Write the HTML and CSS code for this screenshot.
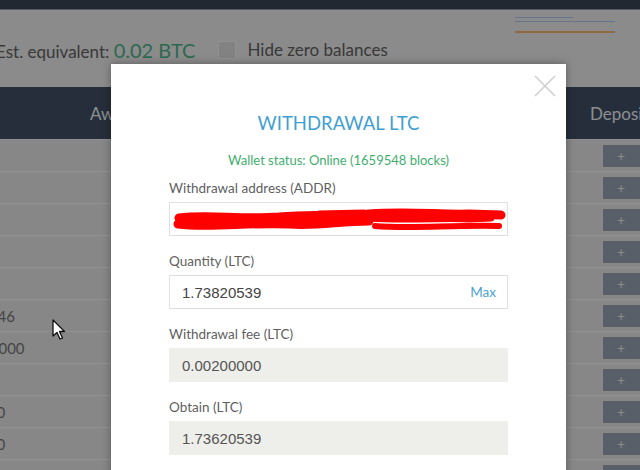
FILE: index.html
```html
<!DOCTYPE html>
<html>
<head>
<meta charset="utf-8">
<link rel="stylesheet" href="styles.css">
</head>
<body>
<div class="page">
  <div class="topbar"></div>
  <div class="summary">
    <div class="est">Est. equivalent: <span class="btc">0.02 BTC</span></div>
    <div class="hide"><span class="box"></span>Hide zero balances</div>
    <div class="links">
      <span class="ln ln-blue short"></span>
      <span class="ln ln-blue"></span>
      <span class="ln ln-orange"></span>
    </div>
  </div>
  <div class="balances">
    <div class="row head">
      <div class="c1"></div>
      <div class="c2">Awaiting</div>
      <div class="c3">Deposit</div>
    </div>
    <div class="row"><div class="c1"></div><div class="c2"></div><div class="c3"><span class="btn">+</span></div></div>
    <div class="row"><div class="c1"></div><div class="c2"></div><div class="c3"><span class="btn">+</span></div></div>
    <div class="row"><div class="c1"></div><div class="c2"></div><div class="c3"><span class="btn">+</span></div></div>
    <div class="row"><div class="c1"></div><div class="c2"></div><div class="c3"><span class="btn">+</span></div></div>
    <div class="row"><div class="c1"></div><div class="c2"></div><div class="c3"><span class="btn">+</span></div></div>
    <div class="row"><div class="c1 v46">0.00000046</div><div class="c2"></div><div class="c3"><span class="btn">+</span></div></div>
    <div class="row"><div class="c1 v000">10.00000000</div><div class="c2"></div><div class="c3"><span class="btn">+</span></div></div>
    <div class="row"><div class="c1"></div><div class="c2"></div><div class="c3"><span class="btn">+</span></div></div>
    <div class="row"><div class="c1 v0">0.0000000</div><div class="c2"></div><div class="c3"><span class="btn">+</span></div></div>
    <div class="row"><div class="c1 v0">0.0000000</div><div class="c2"></div><div class="c3"><span class="btn">+</span></div></div>
    <div class="row"><div class="c1"></div><div class="c2"></div><div class="c3"><span class="btn">+</span></div></div>
  </div>
</div>

<div class="overlay"></div>

<svg class="cursor" width="14" height="22" viewBox="0 0 14 22">
  <path d="M1 1 L1 17 L5 13.5 L8 20 L10.5 19 L7.5 12.5 L12.5 12.5 Z" fill="#fff" stroke="#111" stroke-width="1.3" stroke-linejoin="round"/>
</svg>

<div class="modal">
  <svg class="close" width="22" height="22" viewBox="0 0 22 22">
    <path d="M1 1 L21 21 M21 1 L1 21" stroke="#cfcfcf" stroke-width="1.6"/>
  </svg>
  <h2 class="title">WITHDRAWAL LTC</h2>
  <div class="status">Wallet status: Online (1659548 blocks)</div>

  <div class="field">
    <div class="label">Withdrawal address (ADDR)</div>
    <div class="input">
      <svg class="scribble" width="339" height="34" viewBox="0 0 339 34">
        <g fill="none" stroke="#f00" stroke-linecap="round" stroke-linejoin="round">
          <path d="M10 16 C40 12 70 18 110 15 C150 11 170 16 200 12 C240 9 270 13 300 12 L332 13" stroke-width="9"/>
          <path d="M9 22 C40 26 80 20 120 22 C150 24 170 19 200 19" stroke-width="9"/>
          <path d="M12 19 L120 19" stroke-width="9"/>
          <path d="M200 16 C240 19 280 15 300 17 L322 16" stroke-width="7"/>
          <path d="M206 24 C240 27 280 23 330 24" stroke-width="6"/>
          <path d="M150 10 L195 9" stroke-width="3"/>
        </g>
      </svg>
    </div>
  </div>

  <div class="field">
    <div class="label">Quantity (LTC)</div>
    <div class="input"><span class="val">1.73820539</span><span class="max">Max</span></div>
  </div>

  <div class="field">
    <div class="label">Withdrawal fee (LTC)</div>
    <div class="input disabled"><span class="val">0.00200000</span></div>
  </div>

  <div class="field">
    <div class="label">Obtain (LTC)</div>
    <div class="input disabled"><span class="val">1.73620539</span></div>
  </div>
</div>
</body>
</html>
```

FILE: styles.css
```css
html, body {
  margin: 0;
  padding: 0;
  width: 640px;
  height: 470px;
  overflow: hidden;
}
body {
  font-family: "Lato", "Open Sans", sans-serif;
  background: #e8e8e8;
  position: relative;
}
.page {
  width: 720px;
}
.topbar {
  height: 9px;
  background: #374353;
  border-bottom: 1px solid #8a94a0;
}
.summary {
  height: 77px;
  display: flex;
  align-items: center;
  position: relative;
  box-sizing: border-box;
  padding-top: 2px;
}
.est {
  margin-left: -4px;
  font-size: 17px;
  color: #606060;
}
.btc {
  font-size: 20px;
  color: #4baf85;
}
.hide {
  display: flex;
  align-items: center;
  margin-left: 23px;
  font-size: 17px;
  color: #606060;
}
.box {
  width: 16px;
  height: 16px;
  background: #d9d9d9;
  border: 1px solid #f2f2f2;
  margin-right: 11px;
}
.links {
  position: absolute;
  left: 515px;
  top: 7px;
  width: 105px;
  display: flex;
  flex-direction: column;
  gap: 3px;
}
.ln {
  display: block;
  height: 1px;
  width: 100px;
}
.ln.short { width: 58px; }
.ln-blue { background: #a8c4e8; }
.ln-orange { background: #f0b070; height: 2px; margin-top: 6px; }

.balances {
  margin-left: -80px;
  width: 800px;
}
.row {
  display: grid;
  grid-template-columns: 160px 487px 153px;
  height: 32px;
  align-items: center;
  background: #e2e2e2;
  border-top: 1px solid #f2f2f2;
  box-sizing: border-box;
  font-size: 15px;
  color: #727272;
}
.row.head {
  height: 52px;
  background: #3f4e61;
  border-top: none;
  color: #e8ebef;
  font-size: 17px;
}
.head .c2 { padding-left: 10px; }
.head .c3 { padding-left: 23px; }
.c3 {
  height: 100%;
  display: flex;
  align-items: center;
}
.btn {
  margin-left: 36px;
  width: 56px;
  height: 22px;
  background: #939eaf;
  color: #e4e4e4;
  font-size: 14px;
  display: flex;
  align-items: center;
  justify-content: center;
  padding-right: 20px;
  box-sizing: border-box;
}
.c1.v46 { padding-left: 13px; }
.c1.v000 { padding-left: 14px; }
.c1.v0 { padding-left: 12px; }

.overlay {
  position: absolute;
  inset: 0;
  background: rgba(0, 0, 0, 0.4);
}
.cursor {
  position: absolute;
  left: 52px;
  top: 319px;
}
.modal {
  position: absolute;
  left: 111px;
  top: 64px;
  width: 455px;
  height: 460px;
  background: #fff;
  box-shadow: 0 0 8px rgba(0, 0, 0, 0.35);
  padding: 47px 58px 0;
  box-sizing: border-box;
}
.close {
  position: absolute;
  left: 423px;
  top: 11px;
}
.title {
  margin: 0;
  text-align: center;
  font-weight: 400;
  font-size: 18.5px;
  line-height: 24px;
  color: #3f9fd3;
}
.status {
  margin-top: 17px;
  text-align: center;
  font-size: 13px;
  line-height: 16px;
  color: #3fae6e;
}
.field {
  margin-bottom: 16px;
}
.status + .field { margin-top: 11px; }
.label {
  font-size: 13.5px;
  line-height: 18px;
  color: #5f5f5f;
  margin-bottom: 5px;
}
.input {
  position: relative;
  height: 34px;
  border: 1px solid #e0e0e0;
  box-sizing: border-box;
  display: flex;
  align-items: center;
  justify-content: space-between;
  padding: 0 11px 0 12px;
  font-family: "Liberation Sans", Arial, sans-serif;
  font-size: 15px;
  color: #444;
}
.input.disabled {
  background: #eeeeea;
  border-color: #eeeeea;
  color: #555;
}
.max {
  font-family: "Lato", sans-serif;
  font-size: 13.5px;
  color: #4a9fd5;
}
.scribble {
  position: absolute;
  left: -1px;
  top: -1px;
}
```
